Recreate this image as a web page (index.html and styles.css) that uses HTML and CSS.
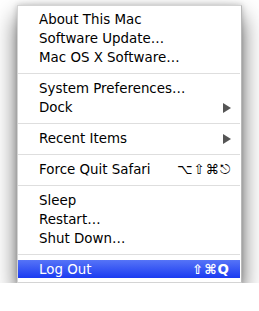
FILE: index.html
```html
<!DOCTYPE html>
<html lang="en">
<head>
<meta charset="UTF-8">
<meta name="viewport" content="width=device-width, initial-scale=1.0">
<title>Apple Menu</title>
<link rel="stylesheet" href="styles.css">
</head>
<body>

<div class="menu">
  <div class="item">About This Mac</div>
  <div class="item">Software Update…</div>
  <div class="item">Mac OS X Software…</div>
  <div class="sep"></div>
  <div class="item">System Preferences…</div>
  <div class="item">Dock <span class="arrow"></span></div>
  <div class="sep"></div>
  <div class="item">Recent Items <span class="arrow"></span></div>
  <div class="sep"></div>
  <div class="item">Force Quit Safari <span class="keys">⌥⇧⌘⎋</span></div>
  <div class="sep"></div>
  <div class="item">Sleep</div>
  <div class="item">Restart…</div>
  <div class="item">Shut Down…</div>
  <div class="sep"></div>
  <div class="item selected">Log Out <span class="keys">⇧⌘Q</span></div>
</div>

</body>
</html>
```

FILE: styles.css
```css
body {
  margin: 0;
  background: #fff;
  font-family: "DejaVu Sans", "Liberation Sans", sans-serif;
}
.menu {
  box-sizing: border-box;
  width: 225px;
  margin: 5px 0 0 17px;
  padding: 4px 0;
  background: #fff;
  border: 1px solid #d4d4d4;
  border-right-color: #b8b8b8;
  box-shadow: 0 12px 22px rgba(0, 0, 0, 0.6), 0 0 6px rgba(0, 0, 0, 0.2);
}
.item {
  display: flex;
  align-items: center;
  height: 19px;
  padding: 0 10px 0 21px;
  font-size: 13.4px;
  color: #000;
}
.sep {
  height: 1px;
  margin: 6px 1px 5px 0;
  background: #dedede;
}
.arrow {
  margin-left: auto;
  width: 0;
  height: 0;
  border-left: 8px solid #555;
  border-top: 5px solid transparent;
  border-bottom: 5px solid transparent;
}
.keys {
  margin-left: auto;
  letter-spacing: 1px;
}
.selected {
  height: 18px;
  margin: 1px 1px 0 0;
  color: #fff;
  background: linear-gradient(#5674f7, #1b3bf1);
}
.selected .keys {
  font-weight: bold;
}
```
